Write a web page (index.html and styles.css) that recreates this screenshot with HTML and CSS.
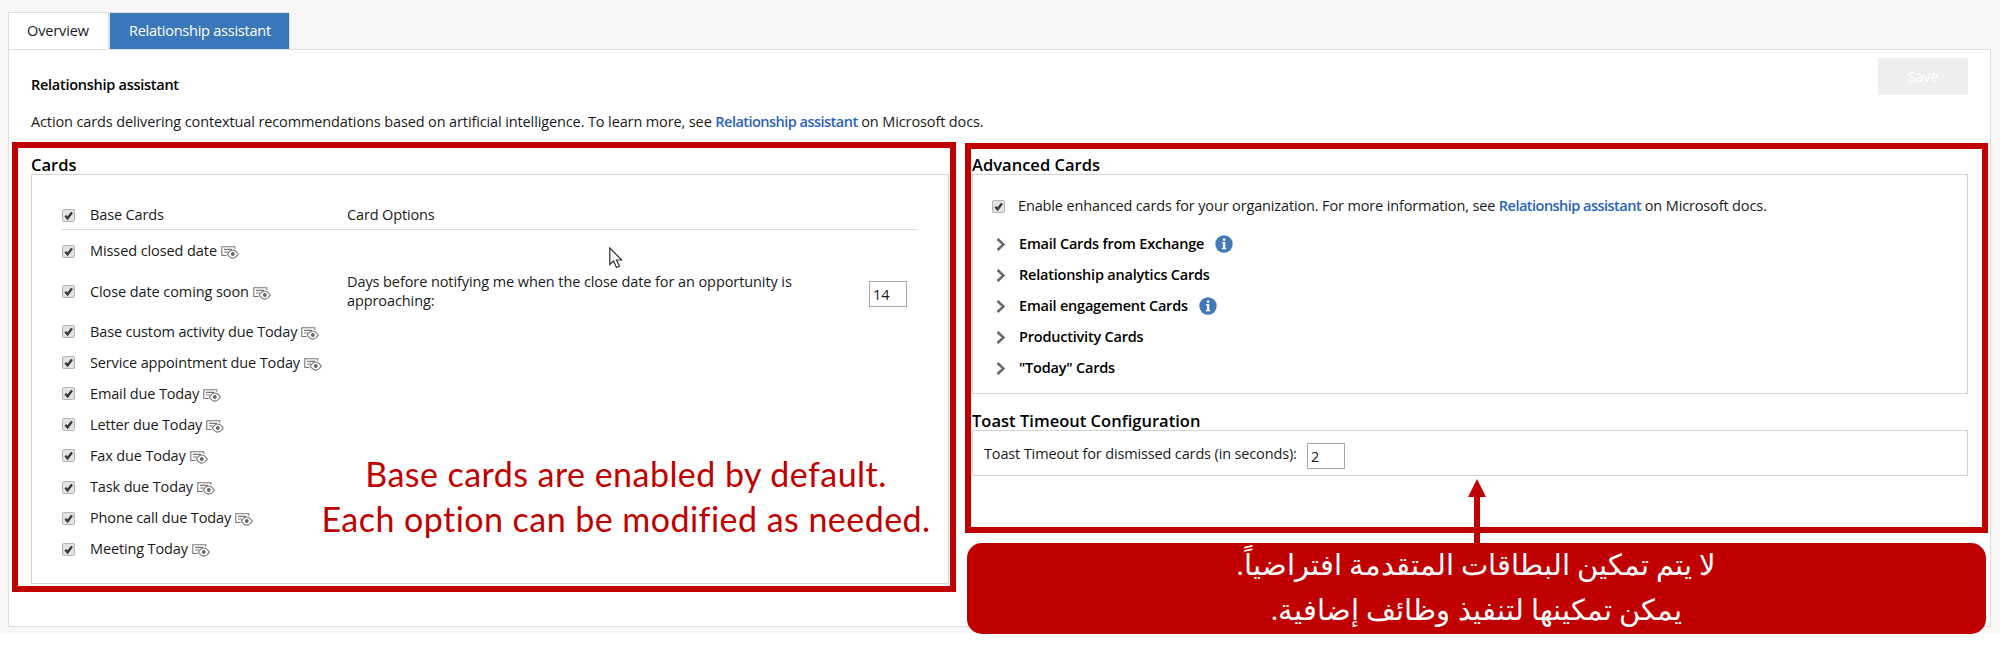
FILE: index.html
```
<!DOCTYPE html>
<html lang="en">
<head>
<meta charset="utf-8">
<title>Relationship assistant</title>
<link rel="stylesheet" href="styles.css">
</head>
<body>
<svg class="defs" aria-hidden="true">
  <symbol id="preview" viewBox="0 0 18 13">
    <path d="M5.500 9.500H.8V.8h13v2M3 3.400h8M3 6h4" fill="none" stroke="#777" stroke-width="1.100"/>
    <path d="M6.300 8.200Q11.700 -.2 17.300 8.200Q11.700 16 6.300 8.200Z" fill="#fff" stroke="#777" stroke-width="1.100"/>
    <circle cx="11.800" cy="8" r="1.900" fill="#666"/>
  </symbol>
  <symbol id="chevron" viewBox="0 0 10 13">
    <path d="M1.500 1l6 5.500-6 5.500" fill="none" stroke="#666" stroke-width="2.400"/>
  </symbol>
  <symbol id="info" viewBox="0 0 18 18">
    <circle cx="9" cy="9" r="8.700" fill="#4179b8"/>
    <path d="M7.900 3.500h2.400v2.200H7.900zM6.900 7h3.400v6h1v1.300H6.900V13h1V8.300h-1z" fill="#fff"/>
  </symbol>
  <symbol id="tick" viewBox="0 0 13 13">
    <path d="M3.300 6.800l2.300 2.500L10 3.400" fill="none" stroke="#3a3a3a" stroke-width="2.400"/>
  </symbol>
</svg>
<div class="page">
  <nav class="tabs">
    <div class="tab tab-overview">Overview</div>
    <div class="tab tab-active">Relationship assistant</div>
  </nav>
  <main class="panel">
    <header class="head">
      <div>
        <h1 class="title">Relationship assistant</h1>
        <p class="intro">Action cards delivering contextual recommendations based on artificial intelligence. To learn more, see <a class="link">Relationship assistant</a> on Microsoft docs.</p>
      </div>
      <button class="save">Save</button>
    </header>
    <div class="columns">
      <section class="base">
        <h2 class="section-title">Cards</h2>
        <div class="box base-box">
          <div class="row row-head"><span class="check"><svg><use href="#tick"/></svg></span><span class="name">Base Cards</span><span>Card Options</span></div>
          <div class="row row-missed"><span class="check"><svg><use href="#tick"/></svg></span><span class="name loose">Missed closed date<svg class="eye"><use href="#preview"/></svg></span></div>
          <div class="row row-close"><span class="check"><svg><use href="#tick"/></svg></span><span class="name loose">Close date coming soon<svg class="eye"><use href="#preview"/></svg></span><span class="option">Days before notifying me when the close date for an opportunity is approaching:</span><span class="field">14</span></div>
          <div class="row"><span class="check"><svg><use href="#tick"/></svg></span><span class="name">Base custom activity due Today<svg class="eye"><use href="#preview"/></svg></span></div>
          <div class="row"><span class="check"><svg><use href="#tick"/></svg></span><span class="name">Service appointment due Today<svg class="eye"><use href="#preview"/></svg></span></div>
          <div class="row"><span class="check"><svg><use href="#tick"/></svg></span><span class="name">Email due Today<svg class="eye"><use href="#preview"/></svg></span></div>
          <div class="row"><span class="check"><svg><use href="#tick"/></svg></span><span class="name">Letter due Today<svg class="eye"><use href="#preview"/></svg></span></div>
          <div class="row"><span class="check"><svg><use href="#tick"/></svg></span><span class="name">Fax due Today<svg class="eye"><use href="#preview"/></svg></span></div>
          <div class="row"><span class="check"><svg><use href="#tick"/></svg></span><span class="name">Task due Today<svg class="eye"><use href="#preview"/></svg></span></div>
          <div class="row"><span class="check"><svg><use href="#tick"/></svg></span><span class="name">Phone call due Today<svg class="eye"><use href="#preview"/></svg></span></div>
          <div class="row"><span class="check"><svg><use href="#tick"/></svg></span><span class="name">Meeting Today<svg class="eye"><use href="#preview"/></svg></span></div>
        </div>
      </section>
      <section class="advanced">
        <h2 class="section-title">Advanced Cards</h2>
        <div class="box advanced-box">
          <div class="enable"><span class="check"><svg><use href="#tick"/></svg></span><span>Enable enhanced cards for your organization. For more information, see <a class="link">Relationship assistant</a> on Microsoft docs.</span></div>
          <div class="group"><svg class="chev"><use href="#chevron"/></svg>Email Cards from Exchange<svg class="info"><use href="#info"/></svg></div>
          <div class="group"><svg class="chev"><use href="#chevron"/></svg>Relationship analytics Cards</div>
          <div class="group"><svg class="chev"><use href="#chevron"/></svg>Email engagement Cards<svg class="info"><use href="#info"/></svg></div>
          <div class="group"><svg class="chev"><use href="#chevron"/></svg>Productivity Cards</div>
          <div class="group"><svg class="chev"><use href="#chevron"/></svg>"Today" Cards</div>
        </div>
        <h2 class="section-title toast-title">Toast Timeout Configuration</h2>
        <div class="box toast-box"><span class="toast-label">Toast Timeout for dismissed cards (in seconds):</span><span class="field">2</span></div>
      </section>
    </div>
  </main>
</div>
<div class="frame frame-base"></div>
<div class="frame frame-advanced"></div>
<p class="note">Base cards are enabled by default.<br>Each option can be modified as needed.</p>
<svg class="arrow" viewBox="0 0 18 65"><path d="M9 0l9 18h-6v47H6V18H0z" fill="#c00000"/></svg>
<div class="callout" dir="rtl" lang="ar">
  <div class="line-one">لا يتم تمكين البطاقات المتقدمة افتراضياً.</div>
  <div class="line-two">يمكن تمكينها لتنفيذ وظائف إضافية.</div>
</div>
<svg class="cursor" viewBox="0 0 14 22"><path d="M.8 1v16.500l3.700-3.500 3 6.500 3-1.300-3-6.200h5.200z" fill="#fff" stroke="#333" stroke-width="1.200"/></svg>
</body>
</html>
```
FILE: styles.css
```
* { box-sizing: border-box; }
body {
  margin: 0;
  background: #fff;
  color: #1a1a1a;
  font: 14.5px/20px "Open Sans", "Noto Sans", sans-serif;
  letter-spacing: -0.14px;
  height: 657px;
  position: relative;
  overflow: hidden;
}
h1, h2, p { margin: 0; }
.defs { position: absolute; width: 0; height: 0; }
.page { background: #f8f7f5; height: 633px; padding: 12px 9px 6px 8px; }
.tabs { display: flex; height: 37px; }
.tab { height: 37px; line-height: 35px; border: 1px solid #dedede; border-bottom: 0; background: #fff; padding-left: 19px; }
.tab-overview { width: 101px; padding-left: 18px; }
.tab-active { width: 181px; background: #3a77ba; color: #fff; letter-spacing: -0.24px; }
.panel { background: #fff; border: 1px solid #dedede; height: 578px; padding: 0 22px; }
.head { display: flex; justify-content: space-between; height: 104px; padding-top: 8px; }
.title { font-size: 14.5px; font-weight: 600; line-height: 20px; letter-spacing: -0.27px; margin-top: 17px; color: #000; }
.intro { margin-top: 17px; letter-spacing: -0.12px; }
.link { color: #2663bd; font-weight: 600; letter-spacing: -0.52px; }
.save { width: 90px; height: 37px; border: 0; background: #eee; color: #fff; font: inherit; letter-spacing: -0.2px; padding: 0; }
.columns { display: grid; grid-template-columns: 918px 996px; column-gap: 23px; }
.section-title { font-size: 16.5px; font-weight: 600; line-height: 22px; height: 20px; letter-spacing: 0.02px; color: #000; }
.box { border: 1px solid #d2d2d2; }
.base-box { height: 410px; padding: 26px 31px 0 30px; }
.row { display: grid; grid-template-columns: 28px 257px 522px 37px; align-items: center; height: 31.1px; }
.row-head { height: 29px; border-bottom: 1px solid #d9d9d9; }
.row-missed { height: 42px; }
.row-close { height: 39px; margin-bottom: 5px; }
.loose { letter-spacing: -0.09px; }
.name { white-space: nowrap; }
.check { width: 13px; height: 13px; border: 1px solid #b5b5b5; border-radius: 2px; background: #e3e3e3; display: block; }
.check svg { display: block; width: 13px; height: 13px; margin: -1px; }
.eye { width: 18px; height: 13px; margin-left: 4px; vertical-align: -3px; }
.option { width: 460px; line-height: 19px; letter-spacing: -0.09px; margin-top: -2px; }
.field { width: 38px; height: 26px; border: 1px solid #a6a6a6; padding: 3px 0 0 3px; line-height: 20px; display: block; }
.row-close .field { position: relative; top: 2px; }
.advanced-box { height: 220px; padding: 20px 20px 0 19px; }
.enable { display: grid; grid-template-columns: 26px 1fr; align-items: center; height: 22px; margin-bottom: 11px; }
.group { display: flex; align-items: center; height: 31.1px; font-weight: 600; letter-spacing: -0.21px; color: #000; }
.chev { width: 10px; height: 13px; margin: 1px 13px 0 4px; }
.info { width: 18px; height: 18px; margin-left: 11px; }
.toast-title { margin-top: 16px; }
.toast-box { display: flex; height: 46px; padding: 13px 0 0 11px; }
.toast-label { width: 323px; }
.toast-box .field { margin-top: -1px; }
.frame { position: absolute; border: 6px solid #c00000; }
.frame-base { left: 12px; top: 142px; width: 944px; height: 450px; }
.frame-advanced { left: 965px; top: 143px; width: 1023px; height: 390px; }
.note { position: absolute; left: 306px; top: 451px; width: 640px; text-align: center; color: #c00000; font: 34px/45px Lato, sans-serif; letter-spacing: 0.46px; }
.arrow { position: absolute; left: 1468px; top: 479px; width: 18px; height: 65px; }
.callout { position: absolute; left: 967px; top: 543px; width: 1019px; height: 91px; border-radius: 15px; background: #c00000; color: #fff; text-align: center; letter-spacing: 0; font-family: "Liberation Serif", serif; line-height: 45px; }
.line-one { font-size: 28.6px; }
.line-two { font-size: 29.4px; }
.cursor { position: absolute; left: 609px; top: 247px; width: 14px; height: 22px; }
```
